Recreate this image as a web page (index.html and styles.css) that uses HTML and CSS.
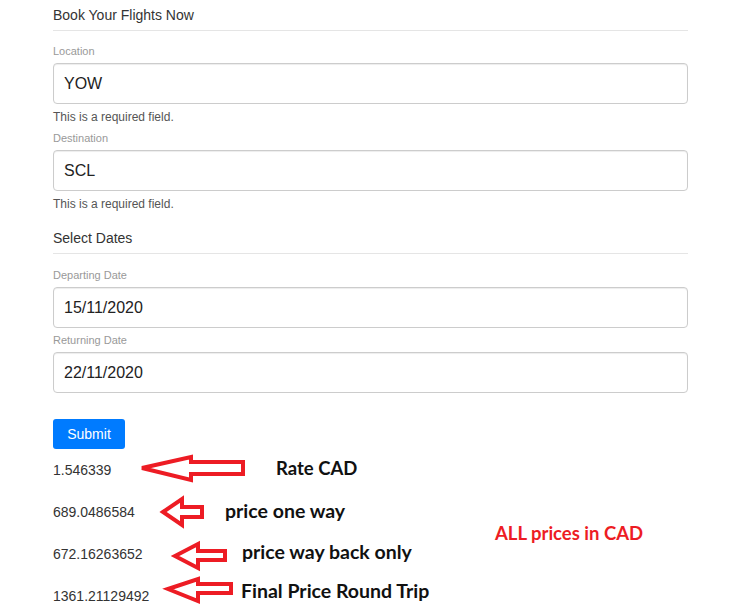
FILE: index.html
```html
<!DOCTYPE html>
<html>
<head>
<meta charset="utf-8">
<link rel="stylesheet" href="styles.css">
</head>
<body>
<div class="page">
  <form class="form">
    <h2 class="section-title">Book Your Flights Now</h2>
    <div class="field">
      <label class="field-label">Location</label>
      <div class="input">YOW</div>
      <div class="help">This is a required field.</div>
    </div>
    <div class="field">
      <label class="field-label">Destination</label>
      <div class="input">SCL</div>
      <div class="help">This is a required field.</div>
    </div>
    <h2 class="section-title second">Select Dates</h2>
    <div class="field tight">
      <label class="field-label">Departing Date</label>
      <div class="input">15/11/2020</div>
    </div>
    <div class="field tight">
      <label class="field-label">Returning Date</label>
      <div class="input">22/11/2020</div>
    </div>
    <button type="button" class="btn">Submit</button>
    <div class="results">
      <div class="result">1.546339</div>
      <div class="result">689.0486584</div>
      <div class="result">672.16263652</div>
      <div class="result">1361.21129492</div>
    </div>
  </form>

  <div class="annotations">
    <svg class="arrows" width="742" height="606" viewBox="0 0 742 606">
      <g fill="none" stroke="#ed1c24" stroke-width="4" stroke-linejoin="miter">
        <polygon points="142,468 191,457 191,462 243,462 243,474 191,474 191,480"/>
        <polygon points="163,512 182,499 182,507 202,507 202,517 182,517 182,525"/>
        <polygon points="175,556 198,544 198,551 225,551 225,560 198,560 198,568"/>
        <polygon points="168,589 198,579 198,584 231,584 231,593 198,593 198,601"/>
      </g>
    </svg>
    <div class="note n1">Rate CAD</div>
    <div class="note n2">price one way</div>
    <div class="note n3">price way back only</div>
    <div class="note n4">Final Price Round Trip</div>
    <div class="note red n5">ALL prices in CAD</div>
  </div>
</div>
</body>
</html>
```

FILE: styles.css
```css
* { box-sizing: border-box; }
html, body { margin: 0; padding: 0; background: #fff; }
body {
  font-family: "Liberation Sans", Arial, sans-serif;
  color: #333;
  width: 742px;
  height: 606px;
  overflow: hidden;
}
.page { position: relative; width: 742px; height: 606px; }
.form {
  margin-left: 53px;
  width: 635px;
  padding-top: 5px;
  display: flex;
  flex-direction: column;
}
.section-title {
  margin: 0 0 12px 0;
  font-size: 14px;
  line-height: 20px;
  font-weight: normal;
  color: #333;
  padding-bottom: 5px;
  border-bottom: 1px solid #e5e5e5;
}
.section-title.second { margin-top: 11px; margin-bottom: 13px; }
.field { display: flex; flex-direction: column; }
.field-label {
  font-size: 11px;
  line-height: 16px;
  color: #999;
  margin-bottom: 4px;
}
.input {
  height: 41px;
  border: 1px solid #ccc;
  border-radius: 4px;
  box-shadow: inset 0 1px 1px rgba(0,0,0,0.075);
  padding: 0 10px;
  font-size: 16px;
  line-height: 39px;
  color: #222;
}
.help {
  font-size: 12px;
  line-height: 17px;
  color: #555;
  margin: 5px 0 4px 0;
}
.field.tight .input { margin-bottom: 4px; }
.btn {
  align-self: flex-start;
  margin-top: 22px;
  width: 72px;
  height: 30px;
  border: none;
  border-radius: 3px;
  background: #007bff;
  color: #fff;
  font-family: "Liberation Sans", Arial, sans-serif;
  font-size: 14px;
  padding: 0;
}
.results {
  margin-top: 11px;
  display: flex;
  flex-direction: column;
  gap: 22px;
}
.result {
  font-size: 14px;
  line-height: 20px;
  color: #333;
}
.annotations {
  position: absolute;
  left: 0;
  top: 0;
  width: 742px;
  height: 606px;
  pointer-events: none;
}
.arrows { position: absolute; left: 0; top: 0; }
.note {
  position: absolute;
  font-family: Lato, "Open Sans", sans-serif;
  font-weight: bold;
  font-size: 19.5px;
  line-height: 24px;
  color: #111;
  white-space: nowrap;
}
.n1 { left: 276px; top: 456px; font-size: 18.5px; }
.n2 { left: 225px; top: 499px; }
.n3 { left: 242px; top: 540px; }
.n4 { left: 241px; top: 579px; }
.red { color: #ed1c24; font-size: 18.5px; }
.n5 { left: 495px; top: 521px; }
```
